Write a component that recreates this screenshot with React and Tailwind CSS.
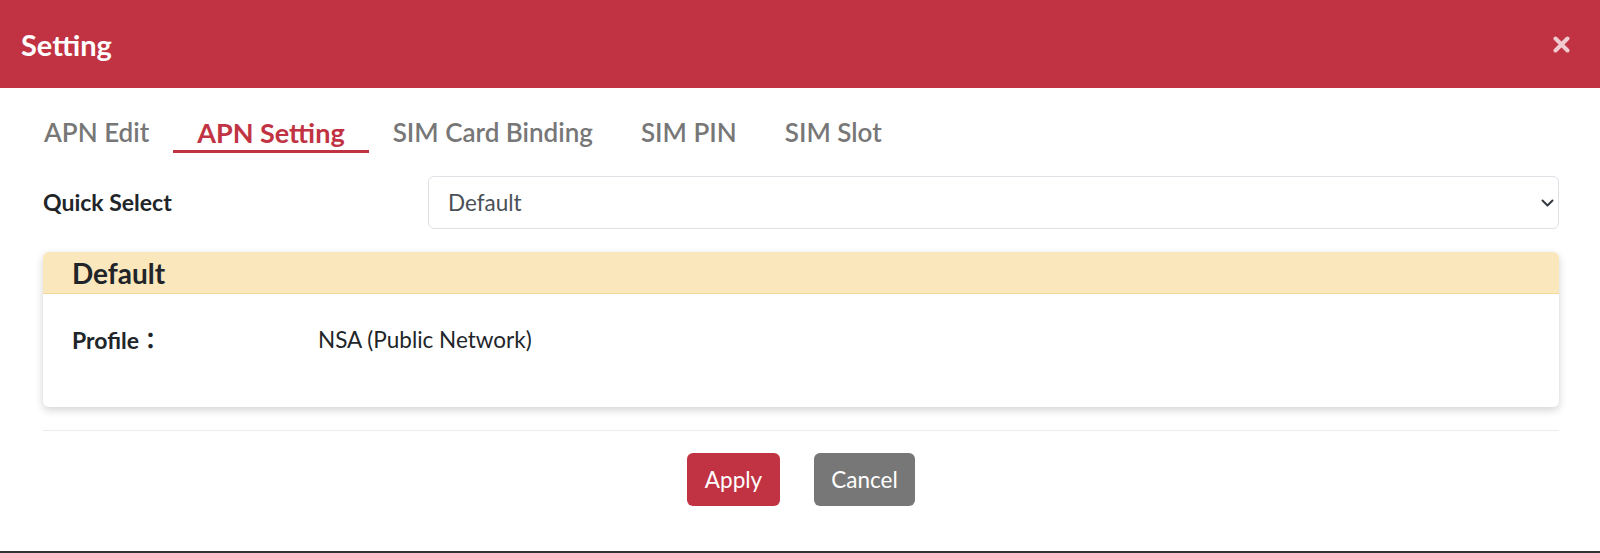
import React, { useState } from "react";

const tabs = ["APN Edit", "APN Setting", "SIM Card Binding", "SIM PIN", "SIM Slot"];

function CloseIcon() {
    return (
        <svg width="17" height="17" viewBox="0 0 17 17" fill="none">
            <path d="M2.5 2.5 L14.5 14.5 M14.5 2.5 L2.5 14.5" stroke="currentColor" strokeWidth="4" strokeLinecap="round" />
        </svg>
    );
}

function Chevron() {
    return (
        <svg width="13" height="9" viewBox="0 0 13 9" fill="none">
            <path d="M1.5 2 L6.5 7 L11.5 2" stroke="#343a40" strokeWidth="2" strokeLinecap="round" strokeLinejoin="round" />
        </svg>
    );
}

export default function App() {
    const [active, setActive] = useState(1);
    const [quick, setQuick] = useState("Default");

    return (
        <div className="w-[1600px] h-[553px] flex flex-col bg-[#333333] font-['Lato','Noto_Sans','Noto_Sans_CJK_JP',sans-serif] overflow-hidden">
            <div className="flex flex-col bg-white h-[551px]">
                {/* Header */}
                <header className="h-[88px] shrink-0 bg-[#c13343] flex items-center justify-between pl-[21px] pr-[30px]">
                    <h1 className="text-[29px] font-bold text-white leading-none">Setting</h1>
                    <button className="text-white/75 cursor-pointer">
                        <CloseIcon />
                    </button>
                </header>

                {/* Tabs */}
                <nav className="flex pl-[20px] pt-[26px]">
                    {tabs.map((t, i) => (
                        <button
                            key={t}
                            onClick={() => setActive(i)}
                            className={`px-6 h-[39px] leading-[35px] border-b-[3px] cursor-pointer ${
                                active === i
                                    ? "text-[27px] font-bold text-[#c13343] border-[#c13343]"
                                    : "text-[26px] font-semibold text-[#777777] border-transparent"
                            }`}
                        >
                            {t}
                        </button>
                    ))}
                </nav>

                <div className="pl-[43px] pr-[41px] pt-[23px] flex flex-col">
                    {/* Quick Select */}
                    <div className="flex items-center">
                        <label className="w-[385px] text-[23px] font-bold text-[#212529]">Quick Select</label>
                        <div className="relative flex-1">
                            <select
                                value={quick}
                                onChange={(e) => setQuick(e.target.value)}
                                className="appearance-none w-full h-[53px] border border-[#dee2e6] rounded-[6px] pl-[19px] pr-10 text-[22.5px] text-[#495057] bg-white outline-none"
                            >
                                <option>Default</option>
                            </select>
                            <span className="absolute right-[5px] top-1/2 -translate-y-1/2 pointer-events-none">
                                <Chevron />
                            </span>
                        </div>
                    </div>

                    {/* Profile card */}
                    <div className="mt-[23px] h-[155px] rounded-[6px] bg-white shadow-[0_3px_8px_rgba(0,0,0,0.18)] overflow-hidden flex flex-col">
                        <div className="h-[42px] bg-[#fae7bb] border-b border-[#f3d999] px-[29px] flex items-center">
                            <h2 className="text-[28px] font-bold text-[#212529] leading-none">Default</h2>
                        </div>
                        <div className="px-[29px] pt-[31px] flex items-center text-[22.5px] text-[#212529] leading-[30px]">
                            <span className="w-[246px] font-bold text-[23px]">Profile：</span>
                            <span>NSA (Public Network)</span>
                        </div>
                    </div>

                    <hr className="mt-[23px] border-t border-[#ececec]" />

                    {/* Actions */}
                    <div className="mt-[22px] flex justify-center gap-[34px]">
                        <button className="w-[93px] h-[53px] rounded-[6px] bg-[#c13343] text-white text-[22.5px] cursor-pointer">
                            Apply
                        </button>
                        <button className="w-[101px] h-[53px] rounded-[6px] bg-[#777777] text-white text-[22.5px] cursor-pointer">
                            Cancel
                        </button>
                    </div>
                </div>
            </div>
        </div>
    );
}
